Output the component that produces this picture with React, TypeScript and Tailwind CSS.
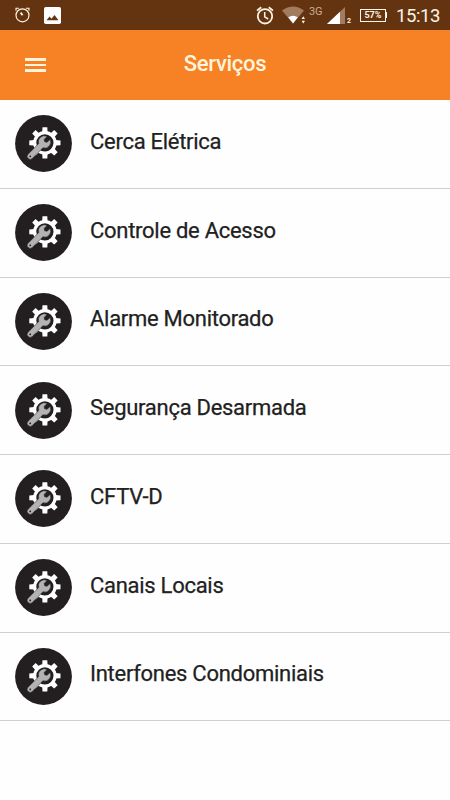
/**
 * Services list screen
 */

interface Service {
  id: number;
  name: string;
}

const services: Service[] = [
  { id: 1, name: 'Cerca Elétrica' },
  { id: 2, name: 'Controle de Acesso' },
  { id: 3, name: 'Alarme Monitorado' },
  { id: 4, name: 'Segurança Desarmada' },
  { id: 5, name: 'CFTV-D' },
  { id: 6, name: 'Canais Locais' },
  { id: 7, name: 'Interfones Condominiais' },
];

const toothAngles = [0, 45, 90, 135, 180, 225, 270, 315];

function ServiceIcon() {
  return (
    <svg viewBox="0 0 57 57" className="h-[57px] w-[57px] shrink-0">
      <circle cx="28.5" cy="28.5" r="28.4" fill="#231f20" />
      <g transform="translate(29.9 27.8)" fill="#fff">
        {toothAngles.map((angle) => (
          <path key={angle} d="M-2.7 -10.5L-2.4 -15.6H2.4L2.7 -10.5Z" transform={`rotate(${angle})`} />
        ))}
        <circle r="10.2" fill="#231f20" stroke="#fff" strokeWidth="3.2" />
      </g>
      {/* wrench */}
      <g transform="translate(29.5 27) rotate(45)">
        <path
          d="M-2.1 -5.8V-1.6L0 -0.2L2.1 -1.6V-5.8A6 6 0 0 1 3 5.2V20.2A3 3 0 0 1 -3 20.2V5.2A6 6 0 0 1 -2.1 -5.8Z"
          fill="#b3b3b3"
          stroke="#231f20"
          strokeWidth="0.5"
        />
        <circle cy="20.2" r="0.9" fill="#231f20" />
      </g>
    </svg>
  );
}

function StatusBar() {
  return (
    <div className="flex h-[30px] items-center bg-[#63340f] pr-[10px] pl-[15px] text-[#fff5e6]">
      <svg viewBox="0 0 15 16" className="h-4 w-[15px]" fill="none" stroke="currentColor">
        <circle cx="7.5" cy="8.3" r="6.5" strokeWidth="1.2" />
        <path d="M1 3.8V1.2H4M14 3.8V1.2H11" strokeWidth="1.1" />
        <path d="M5.6 5.6L7.6 8.3" strokeWidth="1.8" />
      </svg>
      <svg viewBox="0 0 17 17" className="ml-[14px] h-[17px] w-[17px]">
        <rect width="17" height="17" rx="1.8" fill="#fff" />
        <path d="M2.5 13.3L5.5 9.5L7.5 11.8L10.5 8L14.5 13.3Z" fill="#63340f" />
      </svg>

      <div className="ml-auto flex items-center">
        <svg viewBox="0 0 18 19" className="h-[19px] w-[18px]" fill="none" stroke="currentColor">
          <circle cx="9" cy="10.3" r="7.2" strokeWidth="1.8" />
          <path d="M1 4.6L5.2 1.2M17 4.6L12.8 1.2" strokeWidth="1.8" />
          <path d="M8.7 6V10.8L12.2 13" strokeWidth="1.5" />
        </svg>
        <svg viewBox="0 0 24 18" className="ml-[8px] h-[18px] w-6">
          <path d="M0 4.4Q11 -3.5 22 4.4L11 17.5Z" fill="#a17c5f" />
          <path d="M6.2 11.2Q11 8.2 15.8 11.2L11 17.5Z" fill="#fff" />
          <path d="M21.3 10.2L23 13H19.6ZM21.3 17.5L19.6 14.7H23Z" fill="#fff5e6" />
        </svg>
        <span className="mb-[7px] ml-[3px] w-[17px] text-[11px] leading-none text-[#c9ad94]">3G</span>
        <svg viewBox="0 0 19 17" className="ml-px h-[17px] w-[19px]">
          <path d="M0 17L18 0V17Z" fill="#a17c5f" />
          <path d="M0 17L13 4.7V17Z" fill="#fff" />
        </svg>
        <span className="mt-3 w-3 pl-px text-[7px] leading-none font-bold">2</span>
        <div className="ml-[2px] flex items-center">
          <div className="flex h-[13px] w-[26px] items-center justify-center border border-current text-[9px] leading-none font-bold">
            57%
          </div>
          <div className="h-[6px] w-px bg-current" />
        </div>
        <span className="mt-[2px] ml-[9px] text-[18.5px] leading-none tracking-[-0.4px]">15:13</span>
      </div>
    </div>
  );
}

function Header() {
  return (
    <header className="grid h-[70px] grid-cols-[1fr_auto_1fr] items-center bg-[#f78125] pl-[25px] text-[#fff5dc]">
      <button type="button" aria-label="Menu" className="flex w-[21px] flex-col gap-[3px]">
        <span className="h-[2.5px] bg-current" />
        <span className="h-[2.5px] bg-current" />
        <span className="h-[2.5px] bg-current" />
      </button>
      <h1 className="mr-[25px] mb-[2px] text-[22px] leading-none font-medium tracking-[-0.3px]">Serviços</h1>
    </header>
  );
}

function ServiceRow({ service }: { service: Service }) {
  return (
    <li className="flex h-[88.75px] items-center border-b border-[#d0d0d0] pl-[15px]">
      <ServiceIcon />
      <span className="mb-[4px] ml-[18px] text-[22px] leading-none tracking-[-0.28px] text-[#212121] [-webkit-text-stroke:0.25px_#212121]">
        {service.name}
      </span>
    </li>
  );
}

export default function App() {
  return (
    <div className="h-[800px] w-[450px] overflow-hidden bg-[#fefefe] font-['Roboto',sans-serif]">
      <StatusBar />
      <Header />
      <ul>
        {services.map((service) => (
          <ServiceRow key={service.id} service={service} />
        ))}
      </ul>
    </div>
  );
}
